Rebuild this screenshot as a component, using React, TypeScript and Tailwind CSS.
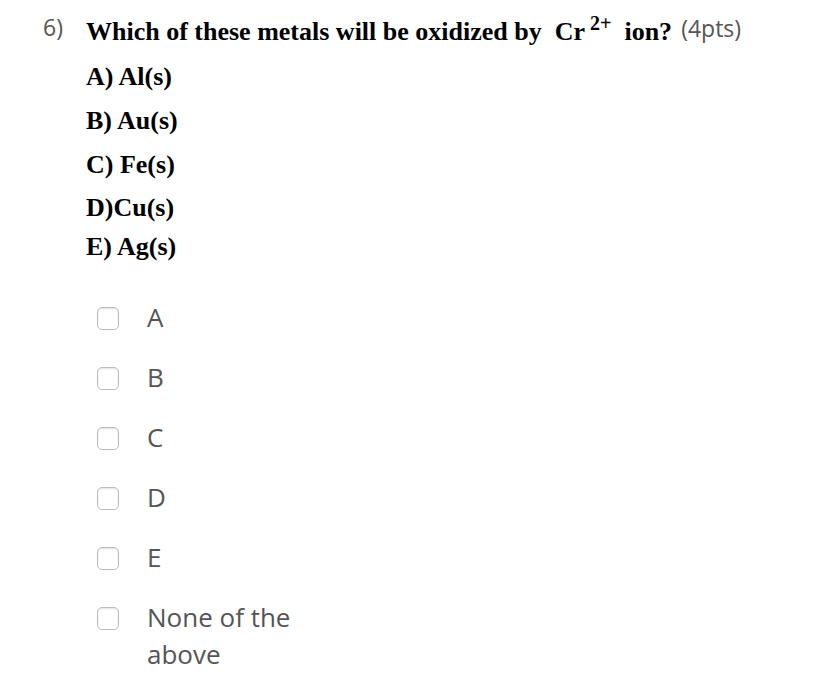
const serif = "font-['Liberation_Serif','Times_New_Roman',serif]";
const sans = "font-['Open_Sans','Liberation_Sans',sans-serif]";

const metals = [
  { text: "A) Al(s)", mt: "mt-[16px]" },
  { text: "B) Au(s)", mt: "mt-[14px]" },
  { text: "C) Fe(s)", mt: "mt-[14px]" },
  { text: "D)Cu(s)", mt: "mt-[13px]" },
  { text: "E) Ag(s)", mt: "mt-[9px]" },
];

const choices = ["A", "B", "C", "D", "E", "None of the above"];

export default function App() {
  return (
    <div className="w-[837px] h-[690px] bg-white pl-[43px] pt-[12px]">
      <div className="flex items-baseline h-[34px]">
        <span className={`${sans} relative -top-[4px] w-[43px] text-[23px] text-[#555]`}>6)</span>
        <span className={`${serif} text-[26px] font-bold text-black whitespace-nowrap`}>
          Which of these metals will be oxidized by&nbsp; Cr
          <span className="ml-[5px] text-[20px] relative -top-[10px]">2+</span>&nbsp;&nbsp;ion?
        </span>
        <span className={`${sans} relative -top-[3px] ml-[9px] text-[23px] text-[#555]`}>(4pts)</span>
      </div>

      <div className="pl-[43px]">
        {metals.map((m) => (
          <div key={m.text} className={`${serif} ${m.mt} text-[26px] font-bold leading-[30px] text-black`}>
            {m.text}
          </div>
        ))}
      </div>

      <div className="mt-[42px] pl-[54px] flex flex-col gap-[28px]">
        {choices.map((c) => (
          <label key={c} className="flex items-start gap-[28px]">
            <span className="mt-[3px] w-[22px] h-[23px] shrink-0 rounded-[5px] border border-[#bbb] bg-white shadow-[inset_0_1px_2px_rgba(0,0,0,0.12)]" />
            <span className={`${sans} w-[160px] text-[26px] leading-[37px] -mt-[5px] text-[#555]`}>{c}</span>
          </label>
        ))}
      </div>
    </div>
  );
}
